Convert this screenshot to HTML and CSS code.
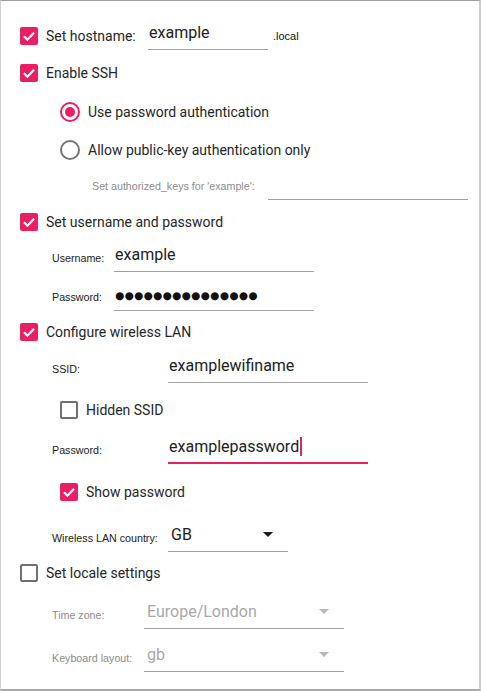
FILE: index.html
```html
<!DOCTYPE html>
<html lang="en">
<head>
<meta charset="utf-8">
<title>OS customisation</title>
<link rel="stylesheet" href="styles.css">
</head>
<body>
<div class="frame">
  <div class="row row-field">
    <span class="cb on"><svg viewBox="0 0 18 18" width="18" height="18"><path d="M4 9.3 L7.4 12.7 L14 5.8" fill="none" stroke="#fff" stroke-width="2.3"/></svg></span>
    <span class="cb-text host-label">Set hostname:</span>
    <div class="field w120">example</div>
    <span class="suffix">.local</span>
  </div>

  <div class="row row-cb g9">
    <span class="cb on"><svg viewBox="0 0 18 18" width="18" height="18"><path d="M4 9.3 L7.4 12.7 L14 5.8" fill="none" stroke="#fff" stroke-width="2.3"/></svg></span>
    <span class="cb-text">Enable SSH</span>
  </div>

  <div class="row row-cb g11 ind40">
    <svg class="radio" viewBox="0 0 20 20" width="20" height="20"><circle cx="10" cy="10" r="9" fill="none" stroke="#e91e63" stroke-width="2"/><circle cx="10" cy="10" r="5" fill="#e91e63"/></svg>
    <span class="radio-text">Use password authentication</span>
  </div>

  <div class="row row-cb g10 ind40">
    <svg class="radio" viewBox="0 0 20 20" width="20" height="20"><circle cx="10" cy="10" r="9" fill="none" stroke="#757575" stroke-width="2"/></svg>
    <span class="radio-text">Allow public-key authentication only</span>
  </div>

  <div class="row row-field g7 ind72">
    <span class="lbl lbl-dim w176">Set authorized_keys for 'example':</span>
    <div class="field w200"></div>
  </div>

  <div class="row row-cb g8">
    <span class="cb on"><svg viewBox="0 0 18 18" width="18" height="18"><path d="M4 9.3 L7.4 12.7 L14 5.8" fill="none" stroke="#fff" stroke-width="2.3"/></svg></span>
    <span class="cb-text">Set username and password</span>
  </div>

  <div class="row row-field g7 ind32">
    <span class="lbl w62">Username:</span>
    <div class="field w200">example</div>
  </div>

  <div class="row row-field g10 ind32">
    <span class="lbl w62">Password:</span>
    <div class="field w200"><span class="dots">●●●●●●●●●●●●●●●</span></div>
  </div>

  <div class="row row-cb g7">
    <span class="cb on"><svg viewBox="0 0 18 18" width="18" height="18"><path d="M4 9.3 L7.4 12.7 L14 5.8" fill="none" stroke="#fff" stroke-width="2.3"/></svg></span>
    <span class="cb-text">Configure wireless LAN</span>
  </div>

  <div class="row row-field g8 ind32">
    <span class="lbl w116">SSID:</span>
    <div class="field w200">examplewifiname</div>
  </div>

  <div class="row row-cb g13 ind40">
    <span class="cb off"></span>
    <span class="cb-text">Hidden SSID</span>
  </div>

  <div class="row row-field g11 ind32">
    <span class="lbl w116">Password:</span>
    <div class="field w200 focused">examplepassword<span class="caret"></span></div>
  </div>

  <div class="row row-cb g14 ind40">
    <span class="cb on"><svg viewBox="0 0 18 18" width="18" height="18"><path d="M4 9.3 L7.4 12.7 L14 5.8" fill="none" stroke="#fff" stroke-width="2.3"/></svg></span>
    <span class="cb-text">Show password</span>
  </div>

  <div class="row row-field g17 ind32">
    <span class="lbl w116">Wireless LAN country:</span>
    <div class="field combo w120"><span>GB</span><span class="arrow"></span></div>
  </div>

  <div class="row row-cb g7">
    <span class="cb off"></span>
    <span class="cb-text">Set locale settings</span>
  </div>

  <div class="row row-field g13 ind32">
    <span class="lbl lbl-dim w92">Time zone:</span>
    <div class="field combo disabled w200"><span>Europe/London</span><span class="arrow"></span></div>
  </div>

  <div class="row row-field g14 ind32">
    <span class="lbl lbl-dim w92">Keyboard layout:</span>
    <div class="field combo disabled w200"><span>gb</span><span class="arrow"></span></div>
  </div>
</div>
</body>
</html>
```
FILE: styles.css
```css
* { box-sizing: border-box; }
html, body { margin: 0; padding: 0; background: #fff; }
body {
  font-family: Roboto, "Noto Sans", sans-serif;
  color: #212121;
}
.frame {
  width: 481px;
  height: 691px;
  border-top: 1px solid #a0a0a0;
  border-left: 1px solid #d2d2d2;
  border-right: 2px solid #cdcdcd;
  border-bottom: 2px solid #a8a8a8;
  padding: 20px 0 0 19px;
  overflow: hidden;
}
.row { display: flex; align-items: center; }
.row-cb { height: 28px; }
.row-field { height: 29px; }

.g7 { margin-top: 7px; }
.g8 { margin-top: 8px; }
.g9 { margin-top: 9px; }
.g10 { margin-top: 10px; }
.g11 { margin-top: 11px; }
.g13 { margin-top: 13px; }
.g14 { margin-top: 14px; }
.g17 { margin-top: 17px; }

.ind32 { padding-left: 32px; }
.ind40 { padding-left: 40px; }
.ind72 { padding-left: 72px; }

.cb {
  width: 18px;
  height: 18px;
  border-radius: 2px;
  flex: none;
  display: flex;
  align-items: center;
  justify-content: center;
}
.cb.on { background: #e91e63; }
.cb.off { border: 2px solid #707070; }
.cb svg { display: block; }
.cb-text { margin-left: 8px; font-size: 14px; color: #262626; }
.host-label { width: 102px; flex: none; }

.radio { flex: none; display: block; }
.radio-text { margin-left: 8px; font-size: 14px; color: #262626; }

.lbl {
  font-family: "Liberation Sans", Arial, sans-serif;
  font-size: 10.7px;
  color: #1a1a1a;
  flex: none;
}
.lbl-dim { color: #8c8c8c; }
.w62 { width: 62px; }
.w92 { width: 92px; }
.w116 { width: 116px; }
.w176 { width: 176px; }
.w120 { width: 120px; }
.w200 { width: 200px; }

.field {
  flex: none;
  height: 29px;
  border-bottom: 1px solid #a0a0a0;
  font-size: 16px;
  line-height: 22px;
  padding: 1px 0 5px 1px;
  color: #212121;
  white-space: nowrap;
}
.field.focused {
  border-bottom: 2px solid #e91e63;
  padding-bottom: 4px;
}
.caret {
  display: inline-block;
  width: 2px;
  height: 19px;
  background: #e91e63;
  vertical-align: top;
  margin: 1px 0 0 1px;
}
.dots {
  font-family: "DejaVu Sans", sans-serif;
  font-size: 10.5px;
  letter-spacing: 0.35px;
  color: #111;
}
.suffix {
  margin-left: 5px;
  font-family: "Liberation Sans", Arial, sans-serif;
  font-size: 11px;
  color: #111;
}
.combo {
  display: flex;
  justify-content: space-between;
  align-items: flex-start;
  padding-left: 3px;
  padding-right: 15px;
}
.arrow {
  width: 0;
  height: 0;
  border-left: 5px solid transparent;
  border-right: 5px solid transparent;
  border-top: 5px solid #1a1a1a;
  margin-top: 8px;
}
.combo.disabled { color: #a8a8a8; }
.combo.disabled .arrow { border-top-color: #b8b8b8; }
```
